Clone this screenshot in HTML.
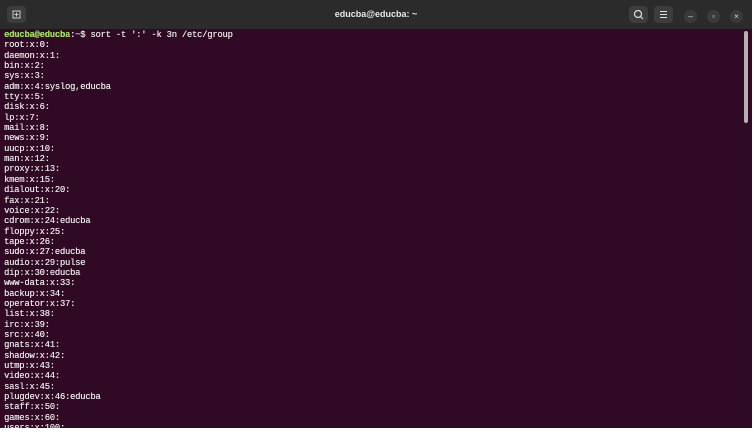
<!DOCTYPE html>
<html><head><style>
html,body{margin:0;padding:0;width:754px;height:438px;background:#fff;overflow:hidden}
.win{position:absolute;left:0;top:0;width:752px;height:428px;background:#300a24;overflow:hidden}
.hd{position:absolute;left:0;top:0;width:752px;height:29px;background:#2b2b2b;color:#e8e8e8;font:bold 9px "Liberation Sans",sans-serif}
.hd .t{position:absolute;left:0;right:0;top:9px;text-align:center}
.btn{position:absolute;top:6px;width:19px;height:17px;background:#3d3d3d;border-radius:4px}
.c{position:absolute;top:10px;width:13px;height:13px;border-radius:50%;background:#3a3a3a;color:#ddd;font:8px "Liberation Sans",sans-serif;text-align:center;line-height:13px}
pre{position:absolute;left:4px;top:30px;margin:0;font:8.8px/10.35px "Liberation Mono",monospace;letter-spacing:-0.2px;color:#e6e6e6;font-weight:bold;-webkit-text-stroke:0}
pre{font-weight:normal;text-shadow:0.2px 0 0 #e6e6e6}
.g{color:#8ae234;font-weight:bold}.b{color:#729fcf;font-weight:bold}
.sb{position:absolute;left:744px;top:31px;width:4px;height:92px;background:#b5b0b4;border-radius:2px}
</style></head><body><div class="win">
<div class="hd"><div class="btn" style="left:7px"><svg width="19" height="17"><rect x="6" y="5" width="7" height="7" fill="none" stroke="#ccc" stroke-width="1"/><path d="M9.5 6.5v4M7.5 8.5h4" stroke="#ccc"/></svg></div>
<div class="t">educba@educba: ~</div>
<div class="btn" style="left:629px"><svg width="19" height="17"><circle cx="9" cy="8" r="3.5" fill="none" stroke="#ddd" stroke-width="1.2"/><path d="M11.5 10.5l2.5 2.5" stroke="#ddd" stroke-width="1.2"/></svg></div>
<div class="btn" style="left:654px"><svg width="19" height="17"><path d="M6 5.5h7M6 8.5h7M6 11.5h7" stroke="#ddd"/></svg></div>
<div class="c" style="left:684px">–</div><div class="c" style="left:707px">▫</div><div class="c" style="left:730px">×</div>
</div>
<pre><span class="g">educba@educba</span>:<span class="b">~</span>$ sort -t ':' -k 3n /etc/group
root:x:0:
daemon:x:1:
bin:x:2:
sys:x:3:
adm:x:4:syslog,educba
tty:x:5:
disk:x:6:
lp:x:7:
mail:x:8:
news:x:9:
uucp:x:10:
man:x:12:
proxy:x:13:
kmem:x:15:
dialout:x:20:
fax:x:21:
voice:x:22:
cdrom:x:24:educba
floppy:x:25:
tape:x:26:
sudo:x:27:educba
audio:x:29:pulse
dip:x:30:educba
www-data:x:33:
backup:x:34:
operator:x:37:
list:x:38:
irc:x:39:
src:x:40:
gnats:x:41:
shadow:x:42:
utmp:x:43:
video:x:44:
sasl:x:45:
plugdev:x:46:educba
staff:x:50:
games:x:60:
users:x:100:</pre>
<div class="sb"></div>
</div></body></html>
